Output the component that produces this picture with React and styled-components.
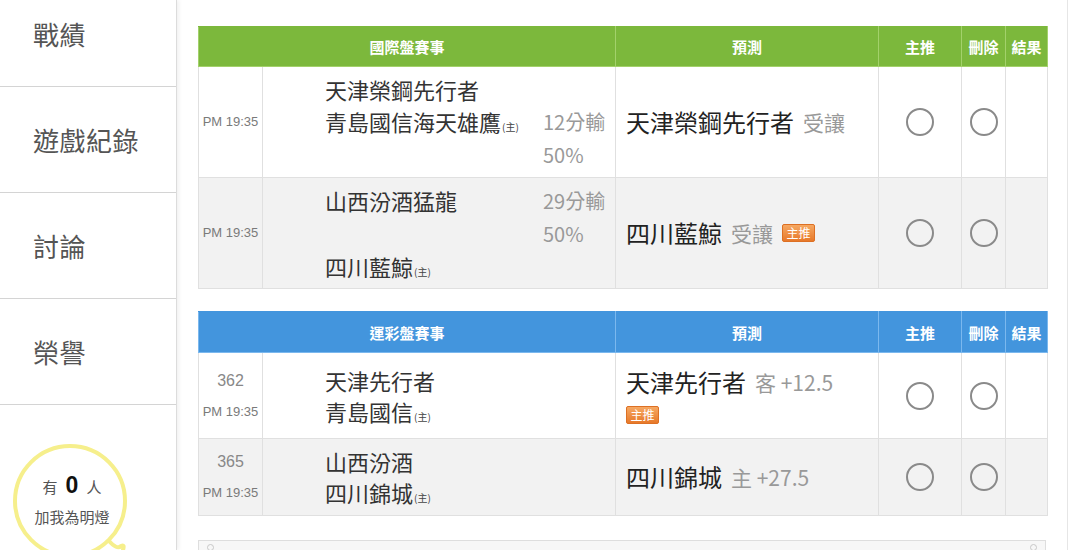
import styled, { createGlobalStyle } from 'styled-components';

const GlobalStyle = createGlobalStyle`
  html, body {
    margin: 0;
    padding: 0;
    background: #fff;
    overflow: hidden;
  }
  body {
    font-family: "Noto Sans CJK TC", "Noto Sans", "Liberation Sans", sans-serif;
  }
  * { box-sizing: border-box; }
`;

const THEMES = {
  green: { bg: '#7cb83c', line: '#a3d16b' },
  blue: { bg: '#4395dd', line: '#7bb8ee' },
};

const intlGames = [
  {
    time: 'PM 19:35',
    teams: ['天津榮鋼先行者', '青島國信海天雄鷹'],
    spread: { on: 1, lines: ['12分輸', '50%'] },
    pick: '天津榮鋼先行者',
    note: '受讓',
  },
  {
    time: 'PM 19:35',
    teams: ['山西汾酒猛龍', '四川藍鯨'],
    spread: { on: 0, lines: ['29分輸', '50%'] },
    pick: '四川藍鯨',
    note: '受讓',
    star: true,
    inline: true,
  },
];

const lotteryGames = [
  {
    no: '362',
    time: 'PM 19:35',
    teams: ['天津先行者', '青島國信'],
    pick: '天津先行者',
    note: '客 +12.5',
    star: true,
  },
  {
    no: '365',
    time: 'PM 19:35',
    teams: ['山西汾酒', '四川錦城'],
    pick: '四川錦城',
    note: '主 +27.5',
  },
];

export default function App() {
  return (
    <>
      <GlobalStyle />
      <Page>
        <Sidebar>
          <MenuItem $first>戰績</MenuItem>
          <MenuItem>遊戲紀錄</MenuItem>
          <MenuItem>討論</MenuItem>
          <MenuItem>榮譽</MenuItem>
          <LampWrap>
            <Lamp>
              <LampRing viewBox="0 0 130 130" width="130" height="130">
                <circle cx="57" cy="57" r="55" fill="none" stroke="#f6ef8c" strokeWidth="4" />
                <path d="M96 97 Q104 106 108 102 Q112 100 110 106" fill="none" stroke="#f6ef8c" strokeWidth="4" strokeLinecap="round" />
              </LampRing>
              <LampLine>
                有 <Count>0</Count> 人
              </LampLine>
              <LampLine>加我為明燈</LampLine>
            </Lamp>
          </LampWrap>
        </Sidebar>
        <Main>
          <GameTable title="國際盤賽事" theme="green" games={intlGames} />
          <GameTable title="運彩盤賽事" theme="blue" games={lotteryGames} compact />
          <NoteBox>
            <Handle />
            <Handle />
          </NoteBox>
        </Main>
      </Page>
    </>
  );
}

function GameTable({ title, theme, games, compact }) {
  const t = THEMES[theme];
  const h = compact ? 41 : 40;
  return (
    <Table>
      <colgroup>
        <col style={{ width: 64 }} />
        <col style={{ width: 353 }} />
        <col style={{ width: 263 }} />
        <col style={{ width: 83 }} />
        <col style={{ width: 44 }} />
        <col style={{ width: 42 }} />
      </colgroup>
      <thead>
        <tr>
          <HeadCell $bg={t.bg} $line={t.line} $h={h} colSpan={2}>{title}</HeadCell>
          <HeadCell $bg={t.bg} $line={t.line} $h={h}>預測</HeadCell>
          <HeadCell $bg={t.bg} $line={t.line} $h={h}>主推</HeadCell>
          <HeadCell $bg={t.bg} $line={t.line} $h={h}>刪除</HeadCell>
          <HeadCell $bg={t.bg} $line={t.line} $h={h}>結果</HeadCell>
        </tr>
      </thead>
      <tbody>
        {games.map((g, i) => (
          <Row key={i} $alt={i % 2 === 1}>
            <TimeCell>
              {g.no && <GameNo>{g.no}</GameNo>}
              <Time $compact={compact}>{g.time}</Time>
            </TimeCell>
            <TeamCell $compact={compact}>
              <Teams>
                {g.teams.map((name, k) => (
                  <TeamLine key={k}>
                    <TeamName $compact={compact}>
                      {name}
                      {k === 1 && <Home>(主)</Home>}
                    </TeamName>
                    <Spread>
                      {g.spread && g.spread.on === k &&
                        g.spread.lines.map((s) => <SpreadLine key={s}>{s}</SpreadLine>)}
                    </Spread>
                  </TeamLine>
                ))}
              </Teams>
            </TeamCell>
            <PickCell $tall={g.star && !g.inline}>
              <PickLine>
                {g.pick}
                <PickNote>{g.note}</PickNote>
                {g.star && g.inline && <StarBadge $inline>主推</StarBadge>}
              </PickLine>
              {g.star && !g.inline && <StarBadge>主推</StarBadge>}
            </PickCell>
            <RadioCell><Radio /></RadioCell>
            <RadioCell><Radio /></RadioCell>
            <Cell />
          </Row>
        ))}
      </tbody>
    </Table>
  );
}

const Page = styled.div`
  display: flex;
  height: 550px;
  overflow: hidden;
`;

const Sidebar = styled.aside`
  width: 177px;
  flex-shrink: 0;
  border-right: 1px solid #dcdcdc;
  box-shadow: 2px 0 4px rgba(0, 0, 0, 0.06);
  background: #fff;
  display: flex;
  flex-direction: column;
`;

const MenuItem = styled.div`
  flex-shrink: 0;
  height: ${(p) => (p.$first ? 87 : 106)}px;
  padding: 0 0 ${(p) => (p.$first ? 20 : 0)}px 33px;
  display: flex;
  align-items: center;
  border-bottom: 1px solid #d4d4d4;
  font-size: 26px;
  color: #555;
  letter-spacing: 0.5px;
`;

const LampWrap = styled.div`
  flex-shrink: 0;
  padding: 39px 0 0 13px;
`;

const Lamp = styled.div`
  position: relative;
  width: 114px;
  height: 114px;
  display: flex;
  flex-direction: column;
  align-items: center;
  justify-content: center;
  padding: 0 0 0 4px;
`;

const LampRing = styled.svg`
  position: absolute;
  left: 0;
  top: 0;
`;

const LampLine = styled.div`
  position: relative;
  font-size: 15px;
  line-height: 30px;
  color: #555;
  white-space: nowrap;
  display: flex;
  align-items: baseline;
  gap: 8px;
`;

const Count = styled.span`
  font-family: "Liberation Sans", sans-serif;
  font-size: 23px;
  font-weight: bold;
  color: #111;
`;

const Main = styled.main`
  width: 891px;
  flex-shrink: 0;
  padding: 26px 21px 0;
  border-right: 1px solid #e6e6e6;
  display: flex;
  flex-direction: column;
  gap: 22px;
`;

const Table = styled.table`
  width: 849px;
  flex-shrink: 0;
  border-collapse: collapse;
  table-layout: fixed;
  border: 1px solid #e0e0e0;
`;

const HeadCell = styled.th`
  height: ${(p) => p.$h}px;
  padding: 0;
  background: ${(p) => p.$bg};
  border: 1px solid ${(p) => p.$line};
  border-top-color: ${(p) => p.$bg};
  color: #fff;
  font-size: 15px;
  font-weight: bold;
  text-align: center;
  white-space: nowrap;
`;

const Row = styled.tr`
  background: ${(p) => (p.$alt ? '#f2f2f2' : '#fff')};
`;

const Cell = styled.td`
  border: 1px solid #e0e0e0;
  padding: 0;
  vertical-align: middle;
`;

const TimeCell = styled(Cell)`
  text-align: center;
  color: #888;
`;

const GameNo = styled.div`
  font-size: 16px;
  line-height: 31px;
  font-family: "Liberation Sans", sans-serif;
`;

const Time = styled.div`
  font-size: 13px;
  line-height: ${(p) => (p.$compact ? 31 : 20)}px;
  font-family: "Liberation Sans", sans-serif;
  color: #7a7a7a;
  white-space: nowrap;
`;

const TeamCell = styled(Cell)`
  padding: ${(p) => (p.$compact ? '7px 0 7px 62px' : '6px 0 6px 62px')};
`;

const Teams = styled.div`
  display: flex;
  flex-direction: column;
`;

const TeamLine = styled.div`
  display: grid;
  grid-template-columns: 218px 72px;
  align-items: start;
`;

const TeamName = styled.div`
  font-size: 22px;
  line-height: ${(p) => (p.$compact ? 31 : 32)}px;
  height: ${(p) => (p.$compact ? 31 : 32)}px;
  color: #333;
  white-space: nowrap;
`;

const Home = styled.span`
  font-size: 10px;
  line-height: 1;
  color: #444;
  margin-left: 1px;
`;

const Spread = styled.div`
  display: flex;
  flex-direction: column;
`;

const SpreadLine = styled.div`
  font-size: 20px;
  line-height: 33px;
  color: #999;
  white-space: nowrap;
`;

const PickCell = styled(Cell)`
  padding: ${(p) => (p.$tall ? '12px 10px' : '4px 10px')};
`;

const PickLine = styled.div`
  display: flex;
  align-items: center;
  font-size: 24px;
  line-height: 34px;
  color: #222;
  white-space: nowrap;
`;

const PickNote = styled.span`
  font-size: 21px;
  color: #999;
  margin-left: 9px;
`;

const StarBadge = styled.span`
  display: inline-flex;
  align-items: center;
  justify-content: center;
  width: 33px;
  height: 18px;
  margin: ${(p) => (p.$inline ? '0 0 0 9px' : '7px 0 2px 0')};
  border-radius: 2px;
  background: linear-gradient(#f6a862, #e7792a);
  border: 1px solid #dd7024;
  color: #fff;
  font-size: 12px;
  line-height: 1;
`;

const RadioCell = styled(Cell)`
  text-align: center;
`;

const Radio = styled.span`
  display: inline-block;
  width: 28px;
  height: 28px;
  border-radius: 50%;
  border: 2.5px solid #8a8a8a;
  background: transparent;
  vertical-align: middle;
`;

const NoteBox = styled.div`
  flex-shrink: 0;
  margin-top: 2px;
  height: 40px;
  border: 1px solid #dedede;
  background: #f7f7f7;
  display: flex;
  justify-content: space-between;
  padding: 3px 8px;
`;

const Handle = styled.span`
  width: 7px;
  height: 7px;
  border-radius: 50%;
  border: 1px solid #c8c8c8;
`;
